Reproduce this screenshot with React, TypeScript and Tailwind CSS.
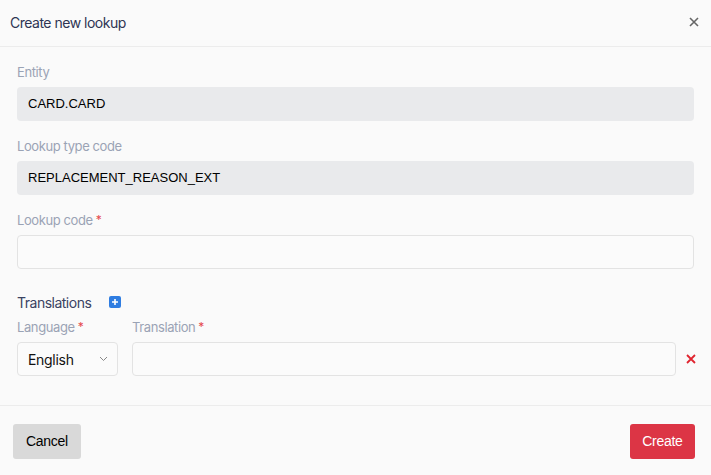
import React from 'react';

const Req = () => <span className="text-[#e5484d] ml-[3px] text-[12px] align-top">*</span>;

export default function App() {
    return (
        <div className="w-[711px] h-[475px] bg-[#fafafa] flex flex-col font-['Inter',sans-serif]">
            <div className="h-[47px] shrink-0 flex items-center justify-between pl-[10px] pr-[12px] pb-[2px] border-b border-[#ececec]">
                <h2 className="text-[14px] text-[#2e3553] tracking-[-0.5px]">Create new lookup</h2>
                <svg width="10" height="10" viewBox="0 0 10 10" className="text-[#666]">
                    <path d="M1 1 L9 9 M9 1 L1 9" stroke="currentColor" strokeWidth="1.6" />
                </svg>
            </div>

            <div className="flex-1 px-[17px] pt-[17px] border-b border-[#ececec]">
                <label className="block text-[13px] text-[#9aa3b5] leading-[16px] tracking-[-0.4px] mb-[7px]">Entity</label>
                <div className="h-[34px] rounded-[4px] bg-[#e9eaec] flex items-center pl-[11px] text-[13px] text-black font-['Liberation_Sans',sans-serif]">
                    CARD.CARD
                </div>

                <label className="block text-[13px] text-[#9aa3b5] leading-[16px] tracking-[-0.4px] mt-[17px] mb-[7px]">Lookup type code</label>
                <div className="h-[34px] rounded-[4px] bg-[#e9eaec] flex items-center pl-[11px] text-[13px] text-black font-['Liberation_Sans',sans-serif]">
                    REPLACEMENT_REASON_EXT
                </div>

                <label className="block text-[13px] text-[#9aa3b5] leading-[16px] tracking-[-0.4px] mt-[17px] mb-[7px]">
                    Lookup code<Req />
                </label>
                <input className="block w-full h-[34px] rounded-[4px] bg-[#fbfbfb] border border-[#e3e3e3] outline-none" />

                <div className="flex items-center mt-[25px] h-[16px]">
                    <span className="text-[14px] text-[#3a4262] tracking-[-0.5px]">Translations</span>
                    <span className="ml-[18px] w-[12px] h-[12px] rounded-[2px] bg-[#2f7de1] flex items-center justify-center">
                        <svg width="8" height="8" viewBox="0 0 8 8">
                            <path d="M4 1 V7 M1 4 H7" stroke="white" strokeWidth="1.6" />
                        </svg>
                    </span>
                </div>

                <div className="flex items-end mt-[9px]">
                    <div className="w-[101px]">
                        <label className="block text-[13px] text-[#9aa3b5] leading-[16px] tracking-[-0.4px] mb-[7px]">
                            Language<Req />
                        </label>
                        <div className="h-[34px] rounded-[4px] bg-[#fbfbfb] border border-[#e3e3e3] flex items-center justify-between pl-[10px] pr-[9px]">
                            <span className="text-[14px] text-[#111] tracking-[-0.3px]">English</span>
                            <svg width="9" height="6" viewBox="0 0 9 6">
                                <path d="M1 1 L4.5 4.5 L8 1" stroke="#888" strokeWidth="1" fill="none" />
                            </svg>
                        </div>
                    </div>
                    <div className="flex-1 ml-[14px]">
                        <label className="block text-[13px] text-[#9aa3b5] leading-[16px] tracking-[-0.4px] mb-[7px]">
                            Translation<Req />
                        </label>
                        <input className="block w-full h-[34px] rounded-[4px] bg-[#fbfbfb] border border-[#e3e3e3] outline-none" />
                    </div>
                    <div className="w-[18px] h-[34px] flex items-center pl-[10px]">
                        <svg width="10" height="10" viewBox="0 0 10 10" className="shrink-0">
                            <path d="M1 1 L9 9 M9 1 L1 9" stroke="#e0242f" strokeWidth="1.8" />
                        </svg>
                    </div>
                </div>
            </div>

            <div className="h-[69px] shrink-0 flex items-start justify-between pl-[13px] pr-[16px] pt-[18px] font-['Liberation_Sans',sans-serif]">
                <button className="h-[35px] px-[13px] rounded-[3px] bg-[#d9d9d9] text-[14px] text-black tracking-[-0.3px]">Cancel</button>
                <button className="h-[35px] px-[12.5px] rounded-[3px] bg-[#dc3545] text-[14px] text-white tracking-[-0.3px]">Create</button>
            </div>
        </div>
    );
}
